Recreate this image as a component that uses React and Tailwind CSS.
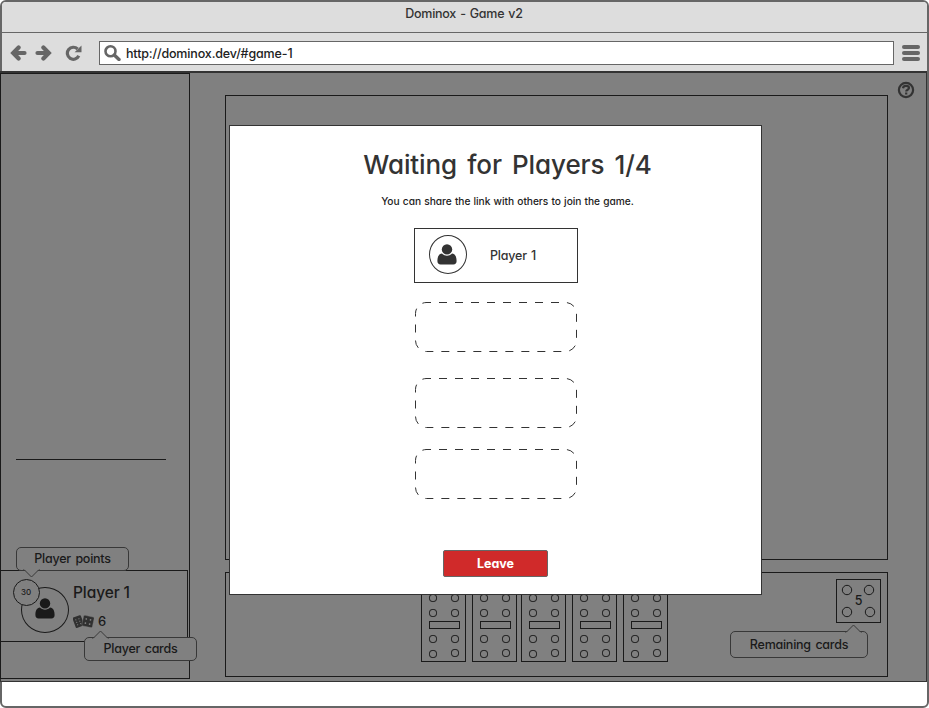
import React from "react";

const DOMINO_GAPS = ["", "ml-[6px]", "ml-[4px]", "ml-[6px]", "ml-[6px]"];

function UserGlyph({ className }) {
  return (
    <svg viewBox="0 0 20 21" className={className} fill="currentColor">
      <circle cx="10" cy="5.4" r="5.2" />
      <path d="M5 9.6C1.6 10 .4 13 .4 17c0 2.2 1.2 3.6 3.2 3.6h12.8c2 0 3.2-1.4 3.2-3.6 0-4-1.2-7-4.6-7.4-1.3 1.3-3 2.1-5 2.1s-3.700-.8-5-2.100z" />
    </svg>
  );
}

function ArrowGlyph({ className }) {
  return (
    <svg viewBox="0 0 17 16" className={className} fill="none" stroke="currentColor" strokeWidth="4.200" strokeLinecap="round">
      <path d="M5 8h9.500" />
      <path d="M8.600 2.500L3.200 8l5.400 5.500" strokeLinejoin="miter" />
    </svg>
  );
}

function ReloadGlyph({ className }) {
  return (
    <svg viewBox="0 0 17 16" className={className} fill="none">
      <path d="M12.600 4A6 6 0 1 0 13.800 10.800" stroke="currentColor" strokeWidth="3.200" />
      <path d="M16.500 .6v6.700H9.600z" fill="currentColor" />
    </svg>
  );
}

function DiceGlyph() {
  return (
    <svg viewBox="0 0 21 13" className="h-[13px] w-[21px]">
      <g transform="rotate(-20 5 7)" fill="#303030">
        <rect x="1" y="1.200" width="8.800" height="11" rx="1" />
        <g fill="#808080">
          <circle cx="3.700" cy="4.300" r=".6" /><circle cx="7" cy="4.300" r=".6" />
          <circle cx="3.700" cy="6.900" r=".6" /><circle cx="7" cy="6.900" r=".6" />
          <circle cx="3.700" cy="9.500" r=".6" /><circle cx="7" cy="9.500" r=".6" />
        </g>
      </g>
      <g transform="rotate(12 15 7)" fill="#303030" stroke="#808080" strokeWidth=".4">
        <rect x="9.500" y="1.100" width="10.800" height="10.800" rx="1.300" />
        <g fill="#808080" stroke="none">
          <circle cx="12.700" cy="4.400" r=".85" /><circle cx="17" cy="4.400" r=".85" />
          <circle cx="12.700" cy="8.700" r=".85" /><circle cx="17" cy="8.700" r=".85" />
        </g>
      </g>
    </svg>
  );
}

function Domino({ className }) {
  const pips = [[11.500, 13], [33.500, 13], [11.500, 28], [33.500, 28], [11.500, 54], [33.500, 54], [11.500, 69], [33.500, 68]];
  return (
    <div className={`h-[77px] w-[45px] shrink-0 border border-[#1a1a1a] ${className}`}>
      <svg viewBox="1 1 43 75" className="h-[75px] w-[43px]" fill="none" stroke="#1a1a1a">
        {pips.map(([x, y], i) => <rect key={i} x={x - 3} y={y - 3.500} width="7" height="7" rx="2.700" />)}
        <rect x="8.500" y="36.500" width="30" height="7" />
      </svg>
    </div>
  );
}

function EmptySeat({ className }) {
  return (
    <svg viewBox="0 0 164 52" className={`h-[52px] w-[164px] shrink-0 ${className}`} fill="none" stroke="#333">
      <path
        d="M12 1.500H151.500a11 11 0 0 1 11 11V39.500a11 11 0 0 1-11 11H12.500a11 11 0 0 1-11-11V12.500a11 11 0 0 1 11-11"
        strokeDasharray="8 8"
        strokeDashoffset="3"
      />
    </svg>
  );
}

function Tip({ className, pointer, down, children }) {
  return (
    <div className={`absolute flex items-center justify-center rounded-[5px] border border-[#383838] bg-[#808080] ${className}`}>
      <span className="whitespace-nowrap text-[12.500px] font-medium leading-4 tracking-[-0.250px] text-[#1a1a1a] [word-spacing:1.5px]">{children}</span>
      <svg
        viewBox="0 0 17 9"
        className={`absolute h-[9px] w-[17px] ${down ? "top-full -mt-px" : "bottom-full -mb-px rotate-180"} ${pointer}`}
        fill="#808080"
      >
        <path d="M.5 0L8.500 8 16.500 0" stroke="#383838" />
        <path d="M1 0h15" stroke="#808080" strokeWidth="1.400" />
      </svg>
    </div>
  );
}

export default function App() {
  return (
    <div className="h-[708px] w-[929px] rounded-md border-2 border-[#666] bg-white font-['Inter','Open_Sans',sans-serif] font-medium text-[#333] [font-feature-settings:'cv11']">
      <header className="flex h-[69px] flex-col rounded-t bg-[#ddd]">
        <div className="flex h-[31px] shrink-0 justify-center border-b border-[#666] pt-1 text-[12.500px] leading-4">
          <span className="-ml-px tracking-[-0.250px] [word-spacing:1px]">Dominox - Game v2</span>
        </div>
        <div className="flex h-[38px] items-center pl-2 pt-[2px] text-[#666]">
          <ArrowGlyph className="h-4 w-[17px]" />
          <ArrowGlyph className="ml-2 h-4 w-[17px] rotate-180" />
          <ReloadGlyph className="ml-[13px] h-4 w-[17px]" />
          <div className="ml-[17px] flex h-6 w-[795px] items-center border border-[#666] bg-white pl-1">
            <svg viewBox="0 0 17 16" className="-mt-px h-4 w-[17px]" fill="none" stroke="currentColor">
              <circle cx="6.500" cy="6.300" r="5" strokeWidth="2.600" />
              <path d="M10.300 10l4.700 4.500" strokeWidth="3.400" strokeLinecap="round" />
            </svg>
            <span className="ml-[5px] mt-[2px] text-[12.500px] leading-4 tracking-[-0.150px] text-[#222]">http://dominox.dev/#game-1</span>
          </div>
          <div className="ml-2 flex flex-col gap-[2px]">
            <span className="h-1 w-[18px] rounded-full bg-[#666]" />
            <span className="h-1 w-[18px] rounded-full bg-[#666]" />
            <span className="h-1 w-[18px] rounded-full bg-[#666]" />
          </div>
        </div>
      </header>

      <main className="relative -ml-[2px] flex h-[611px] w-[927px] border border-t-2 border-[#333] bg-[#808080] text-[#1a1a1a]">
        <aside className="-ml-px flex h-[606px] w-[190px] shrink-0 flex-col border border-[#1a1a1a]">
          <div className="ml-[15px] mt-[385px] h-px w-[150px] shrink-0 bg-[#1a1a1a]" />
          <section className="relative -ml-px mt-[110px] flex h-[72px] w-[188px] shrink-0 border border-[#1a1a1a]">
            <div className="ml-[20px] mt-[16px] flex h-[46px] w-[48px] items-center justify-center rounded-[50%] border border-[#1a1a1a]">
              <UserGlyph className="-mt-[3px] h-[21px] w-[20px]" />
            </div>
            <div className="ml-[4px] mt-[12px] flex flex-col">
              <span className="text-[15.500px] leading-5 tracking-[-0.100px]">Player 1</span>
              <span className="mt-[10px] flex items-center gap-1 text-[13px] leading-4"><DiceGlyph />6</span>
            </div>
            <div className="absolute left-[12px] top-[8px] flex h-[27px] w-[27px] items-center justify-center rounded-full border border-[#1a1a1a] bg-[#808080] pb-px pr-px text-[8px]">30</div>
            <Tip className="-top-[24px] left-[15px] h-[24px] w-[113px]" pointer="left-[6px]" down>Player points</Tip>
            <Tip className="left-[83px] top-[66px] h-[24px] w-[113px]" pointer="left-[7px]">Player cards</Tip>
          </section>
        </aside>

        <div className="ml-[35px] mt-[22px] flex w-[663px] flex-col">
          <div className="h-[465px] shrink-0 border border-[#1a1a1a]" />
          <section className="relative mt-[12px] flex h-[105px] shrink-0 border border-[#1a1a1a] pl-[195px] pt-[12px]">
            {DOMINO_GAPS.map((gap, i) => <Domino key={i} className={gap} />)}
            <div className="-mt-[6px] ml-[168px] grid h-[44px] w-[45px] shrink-0 border border-[#1a1a1a]">
              <svg viewBox="1 1 43 42" className="col-start-1 row-start-1 h-[42px] w-[43px]" fill="none" stroke="#1a1a1a">
                <circle cx="11" cy="11" r="4.700" /><circle cx="33" cy="11" r="4.700" />
                <circle cx="11" cy="33" r="4.700" /><circle cx="34" cy="33" r="4.700" />
              </svg>
              <span className="col-start-1 row-start-1 place-self-center text-[12.500px] leading-4">5</span>
            </div>
            <Tip className="left-[504px] top-[58px] h-[27px] w-[138px]" pointer="left-[114px]">Remaining cards</Tip>
          </section>
        </div>

        <svg viewBox="0 0 18 18" className="ml-[9px] mt-[8px] h-[18px] w-[18px]" fill="none" stroke="#333" strokeWidth="2.200">
          <circle cx="9" cy="9" r="7.100" />
          <path d="M6 7.200C6.300 5.500 7.500 4.900 9 4.900c1.800 0 3 .8 3 2.200 0 1.700-2.800 1.600-2.800 3.500M9.200 11.500v2" />
        </svg>

        <section role="dialog" className="absolute left-[228px] top-[52px] flex h-[470px] w-[533px] flex-col items-center border border-[#333] bg-white text-[#333]">
          <h1 className="ml-[24px] mt-[23px] whitespace-nowrap text-[26px] leading-8 tracking-[-0.100px] [word-spacing:3.3px]">Waiting for Players 1/4</h1>
          <p className="ml-[24px] mt-[12px] whitespace-nowrap text-[10.200px] leading-4 tracking-[-0.050px] text-[#222] [word-spacing:0.6px]">You can share the link with others to join the game.</p>
          <div className="ml-[184px] mt-[19px] flex h-[55px] w-[164px] shrink-0 self-start border border-[#333]">
            <div className="ml-[14px] mt-[6px] flex h-[39px] w-[38px] items-center justify-center rounded-[50%] border border-[#333]">
              <UserGlyph className="-ml-[2px] h-[21px] w-[20px]" />
            </div>
            <span className="ml-[23px] mt-[19px] text-[12.500px] leading-4 tracking-[-0.200px] [word-spacing:1px]">Player 1</span>
          </div>
          <EmptySeat className="ml-[184px] mt-[18px] self-start" />
          <EmptySeat className="ml-[184px] mt-[24px] self-start" />
          <EmptySeat className="ml-[184px] mt-[19px] self-start" />
          <button className="ml-[213px] mt-[50px] flex h-[27px] w-[105px] shrink-0 items-center justify-center self-start rounded-[2px] border border-[#666] bg-[#d02a2a] text-[12.500px] font-bold leading-4 text-white">Leave</button>
        </section>
      </main>
    </div>
  );
}
